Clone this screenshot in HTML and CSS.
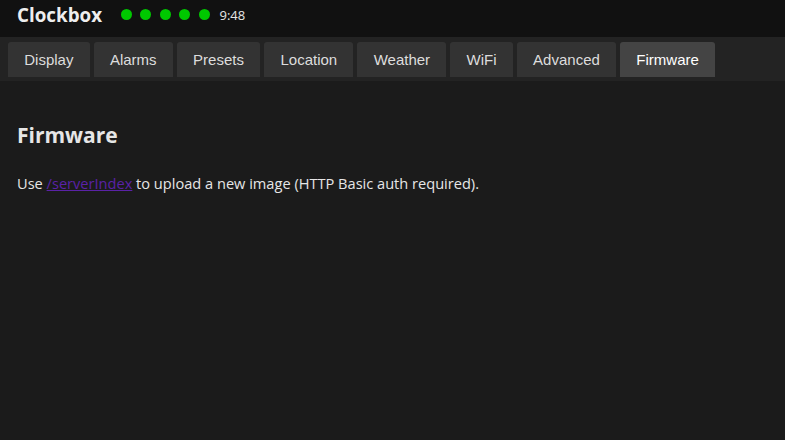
FILE: index.html
```html
<!DOCTYPE html>
<html lang="en">
<head>
    <meta charset="UTF-8">
    <meta name="viewport" content="width=device-width, initial-scale=1.0">
    <title>Clockbox</title>
    <link rel="stylesheet" href="styles.css">
</head>
<body>

<header>
    <h1>Clockbox</h1>
    <div class="status">
        <span class="dot"></span>
        <span class="dot"></span>
        <span class="dot"></span>
        <span class="dot"></span>
        <span class="dot"></span>
        <span class="time">9:48</span>
    </div>
</header>

<nav>
    <button>Display</button>
    <button>Alarms</button>
    <button>Presets</button>
    <button>Location</button>
    <button>Weather</button>
    <button>WiFi</button>
    <button>Advanced</button>
    <button class="active">Firmware</button>
</nav>

<div class="container">
    <h2>Firmware</h2>
    <p>Use <a href="#">/serverIndex</a> to upload a new image (HTTP Basic auth required).</p>
</div>

</body>
</html>
```

FILE: styles.css
```css
body {
    font-family: "Open Sans", "Noto Sans", sans-serif;
    margin: 0;
    padding: 0;
    background-color: #1b1b1b;
    color: #e6e6e6;
}
header {
    background-color: #111;
    height: 29px;
    display: flex;
    align-items: center;
    padding: 0 17px 8px;
}
header h1 {
    font-size: 18.8px;
    font-weight: 700;
    margin: 0 18.5px 0 0;
    color: #eee;
}
.status {
    display: flex;
    align-items: center;
    gap: 8.5px;
}
.dot {
    width: 11px;
    height: 11px;
    border-radius: 50%;
    background-color: #00c800;
}
.time {
    font-size: 13px;
    margin-left: 1.5px;
}
nav {
    display: flex;
    gap: 4px;
    background-color: #232323;
    padding: 5px 8px 4px;
}
nav button {
    font-family: "Liberation Sans", Arial, sans-serif;
    font-size: 15px;
    color: #ddd;
    background-color: #333;
    border: none;
    border-radius: 3px 3px 0 0;
    padding: 0 16.25px;
    height: 35px;
    cursor: pointer;
}
nav button.active {
    background-color: #444;
    color: #fff;
}
.container {
    padding: 20px 17px;
}
.container h2 {
    font-size: 21px;
    margin: 20px 0 24px;
}
.container p {
    font-size: 14.6px;
    margin: 0;
}
.container a {
    color: #5a22a6;
}
```
